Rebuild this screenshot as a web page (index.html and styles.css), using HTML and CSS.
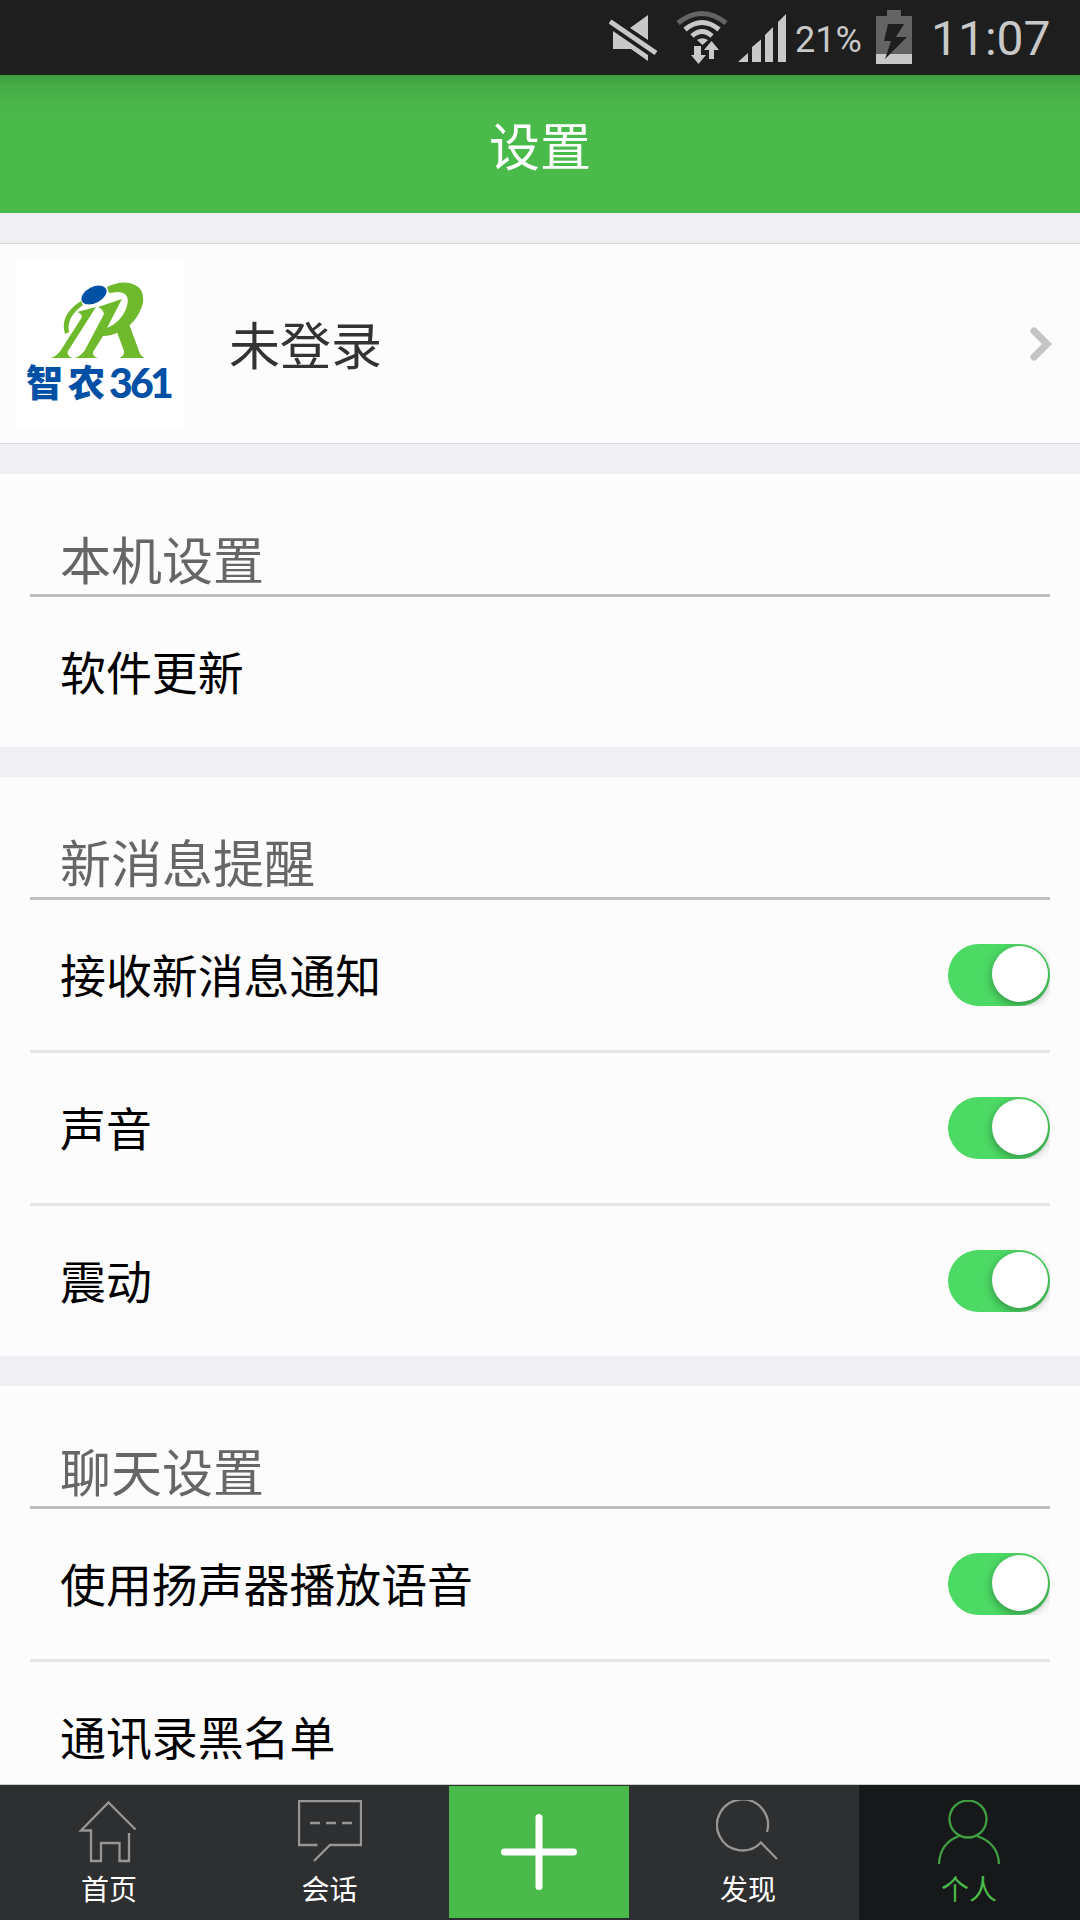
FILE: index.html
```html
<!DOCTYPE html>
<html lang="zh-CN">
<head>
    <meta charset="UTF-8">
    <meta name="viewport" content="width=device-width, initial-scale=1.0">
    <title>设置</title>
    <link rel="stylesheet" href="styles.css">
</head>
<body>
    <div class="status-bar">
        <!-- mute, wifi, signal -->
        <svg class="status-icons" width="212" height="75" viewBox="0 0 212 75">
            <g fill="#c8c8c8">
                <path d="M21 28L39 15V40zM4 31L4 49H22L39 61V55z"/>
                <path d="M1.500 21.500L47 53" stroke="#1e1e1e" stroke-width="11"/>
                <path d="M1 21.500L47 53" stroke="#c8c8c8" stroke-width="5"/>
                <path d="M129 62L139 53V62zM143 62V47L152 39.500V62zM156 62V35L164 27V62zM169 62V22L177 14V62z"/>
                <path d="M88 40Q93 36.500 99 40L93.500 45z"/>
                <path d="M85 46H92V55H97L89.500 64L82 55H85zM100 59V50H95L102.500 41L110 50H105V59z"/>
            </g>
            <g fill="none" stroke="#c8c8c8" stroke-width="5">
                <path d="M69 23Q93 4 117 23" stroke="#646464"/>
                <path d="M76 29.500Q93 15.500 110 29.500M83 36Q93 27 103 36"/>
            </g>
        </svg>
        <span class="battery-text">21%</span>
        <svg class="battery" width="36" height="75" viewBox="0 0 36 75">
            <path d="M0 16H11V10H25V16H36V64H0z" fill="#646464"/>
            <path d="M0 54H36V64H0z" fill="#c8c8c8"/>
            <path d="M12 24H28L20 37H31L9 59L15 41H8z" fill="#1e1e1e"/>
        </svg>
        <span class="clock">11:07</span>
    </div>

    <header class="header">设置</header>

    <main class="content">
        <div class="profile">
            <div class="avatar">
                <svg width="169" height="169" viewBox="0 0 169 169">
                    <g fill="#6fb92c">
                        <path d="M62 53L81 48L53 92Q51 96 57 99H36Q43 96 46 91L67 58Q66 54 62 53z"/>
                        <path d="M83 48L107 40L92 69Q106 63 111 50Q117 34 103 33L94 34L92 28Q104 22 114 24Q130 27 128 44Q122 65 104 73Q96 77 88 77L78 93Q77 97 83 99H60Q67 96 70 91L89 55Q88 50 83 48z"/>
                        <path d="M102 73L114 65L124 92Q125 97 130 99H104Q110 97 109 92z"/>
                        <path d="M66 42Q44 56 50 75L54 73Q51 58 68 46z"/>
                    </g>
                    <ellipse cx="79" cy="36" rx="13.500" ry="8" transform="rotate(-27 79 36)" fill="#0050a5"/>
                    <g class="logo-text">
                        <text x="11" y="138" font-size="37">智</text>
                        <text x="53" y="138" font-size="37">农</text>
                        <text class="logo-num" y="139" font-size="41"><tspan x="94">3</tspan><tspan x="115">6</tspan><tspan x="135">1</tspan></text>
                    </g>
                </svg>
            </div>
            <span class="profile-name">未登录</span>
            <svg class="arrow" width="22" height="34" viewBox="0 0 22 34">
                <path d="M4 4L17 17L4 30" fill="none" stroke="#c4c4c4" stroke-width="7" stroke-linecap="round"/>
            </svg>
        </div>

        <section class="group">
            <h2 class="group-title">本机设置</h2>
            <div class="item"><span>软件更新</span></div>
        </section>

        <section class="group">
            <h2 class="group-title">新消息提醒</h2>
            <div class="item"><span>接收新消息通知</span><span class="toggle"></span></div>
            <div class="item"><span>声音</span><span class="toggle"></span></div>
            <div class="item"><span>震动</span><span class="toggle"></span></div>
        </section>

        <section class="group">
            <h2 class="group-title">聊天设置</h2>
            <div class="item"><span>使用扬声器播放语音</span><span class="toggle"></span></div>
            <div class="item"><span>通讯录黑名单</span></div>
        </section>
    </main>

    <nav class="tabs">
        <div class="tab">
            <svg width="64" height="64" viewBox="0 0 64 64">
                <path d="M58.500 29.500L31.500 2.500L4 30.500H14V61H24V43H42.500V61H52V33"/>
            </svg>
            <span>首页</span>
        </div>
        <div class="tab">
            <svg width="64" height="64" viewBox="0 0 64 64">
                <path d="M19.500 45H1V1H63V45H32L16 61"/>
                <path d="M12 23H22M28 23H38M44 23H54"/>
            </svg>
            <span>会话</span>
        </div>
        <div class="tab-add">
            <svg width="76" height="76" viewBox="0 0 76 76">
                <path d="M38 3.500V72.500M3.500 38H72.500"/>
            </svg>
        </div>
        <div class="tab">
            <svg width="64" height="64" viewBox="0 0 64 64">
                <path d="M51 32A25.500 25.500 0 1 0 45 42.500L61 59"/>
            </svg>
            <span>发现</span>
        </div>
        <div class="tab active">
            <svg width="64" height="64" viewBox="0 0 64 64">
                <circle cx="31" cy="19" r="18.500"/>
                <path d="M2 64Q3 43 22 36M40 36Q61 43 62 64"/>
            </svg>
            <span>个人</span>
        </div>
    </nav>
</body>
</html>
```

FILE: styles.css
```css
* {
    box-sizing: border-box;
}
body {
    margin: 0;
    height: 1920px;
    display: flex;
    flex-direction: column;
    overflow: hidden;
    background: #efeff4;
    font-family: Roboto, "Noto Sans CJK SC", sans-serif;
}
.status-bar {
    flex: none;
    height: 75px;
    display: flex;
    align-items: center;
    background: #1e1e1e;
    color: #c8c8c8;
}
.status-icons {
    margin-left: 609px;
}
.battery-text {
    width: 74px;
    margin-top: 4px;
    margin-left: -26px;
    font-size: 36px;
    white-space: nowrap;
}
.battery {
    margin-left: 7px;
}
.clock {
    margin-top: 2px;
    margin-left: 19px;
    font-size: 48px;
}
.header {
    flex: none;
    height: 138px;
    line-height: 147px;
    text-align: center;
    font-size: 51px;
    color: #fff;
    background: linear-gradient(#3f9c40, #45ac46 10px, #4ab64a 28px, #4aba4b 45px);
}
.content {
    flex: 1;
    min-height: 0;
    overflow: hidden;
    padding-top: 30px;
}
.profile {
    height: 201px;
    display: flex;
    align-items: center;
    padding: 0 28px 0 15px;
    background: #fcfcfc;
    border-top: 1px solid #d9d9d9;
    border-bottom: 1px solid #d9d9d9;
}
.avatar {
    width: 169px;
    height: 169px;
    background: #fff;
}
.logo-text {
    font-family: "Noto Sans CJK SC", sans-serif;
    font-weight: 900;
    fill: #0050a5;
}
.logo-num {
    font-family: Lato, sans-serif;
}
.profile-name {
    flex: 1;
    margin-left: 45px;
    padding-bottom: 2px;
    font-size: 51px;
    color: #333;
}
.group {
    margin-top: 30px;
    padding: 0 30px;
    background: #fcfcfc;
}
.group-title {
    margin: 0;
    height: 123px;
    padding: 51px 30px 0;
    border-bottom: 3px solid #bfbfbf;
    line-height: 75px;
    font-size: 51px;
    font-weight: normal;
    color: #666;
}
.item {
    height: 150px;
    display: flex;
    align-items: center;
    justify-content: space-between;
    padding-left: 30px;
    font-size: 45.9px;
    color: #000;
}
.item span:first-child {
    padding-bottom: 4px;
}
.item + .item {
    height: 153px;
    border-top: 3px solid #e5e5e5;
}
.toggle {
    position: relative;
    width: 102px;
    height: 62px;
    overflow: hidden;
}
.toggle::before {
    content: "";
    position: absolute;
    inset: 0;
    border-radius: 31px;
    background: #4cd964;
}
.toggle::after {
    content: "";
    position: absolute;
    top: 2px;
    right: 2px;
    width: 56px;
    height: 56px;
    border-radius: 50%;
    background: #fff;
    box-shadow: 0 3px 10px rgba(0, 0, 0, 0.35);
}
.tabs {
    flex: none;
    height: 136px;
    display: flex;
    border-top: 1px solid #c8d2c8;
    background: #2e2f31;
}
.tab {
    width: 220px;
    padding: 15px 2px 0 0;
    display: flex;
    flex-direction: column;
    align-items: center;
    font-size: 28px;
    line-height: 54px;
    color: #fff;
}
.tab:nth-child(2) {
    width: 219px;
    padding-right: 0;
}
.tab svg {
    flex: none;
    fill: none;
    stroke: #969696;
    stroke-width: 2.3;
}
.tab.active {
    width: 221px;
    padding-right: 1px;
    background: #17181a;
    color: #4aba4b;
}
.tab.active svg {
    stroke: #3f9e40;
}
.tab-add {
    width: 180px;
    height: 132px;
    margin: 1px 10px;
    display: flex;
    align-items: center;
    justify-content: center;
    background: #4aba4b;
}
.tab-add svg {
    fill: none;
    stroke: #fff;
    stroke-width: 7;
    stroke-linecap: round;
}
```
